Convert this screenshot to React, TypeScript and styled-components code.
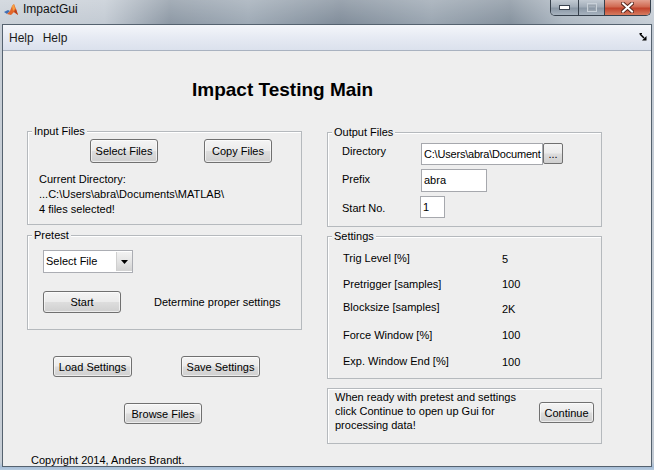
import React from 'react';
import styled, { createGlobalStyle } from 'styled-components';

const Global = createGlobalStyle`
  html, body { margin: 0; padding: 0; }
  body { font-family: "Liberation Sans", Arial, sans-serif; background: #fff; }
  * { box-sizing: border-box; }
`;

const Window = styled.div`
  width: 654px;
  height: 470px;
  display: flex;
  flex-direction: column;
  overflow: hidden;
  background:
    linear-gradient(to bottom, rgba(160, 184, 210, 0) 0, rgba(160, 184, 210, 0) 462px, #a6bdd6 467px, #b7cbe0 470px),
    linear-gradient(to right, #c7ced6 0%, #c0c8d1 16%, #8793a0 26%, #9aa6b2 38%, #7a8795 52%, #95a1ad 66%, #7f8c99 78%, #a9b4bf 86%, #c3cbd4 100%);
`;

const TitleBar = styled.div`
  height: 24px;
  flex: none;
  display: flex;
  align-items: flex-start;
  background: linear-gradient(to bottom, rgba(255, 255, 255, 0.25), rgba(255, 255, 255, 0.05));
`;

const AppIcon = styled.svg`
  width: 14px;
  height: 14px;
  margin: 3px 0 0 4px;
  flex: none;
`;

const TitleText = styled.span`
  margin-left: 5px;
  font-size: 12px;
  line-height: 19px;
  color: #111;
`;

const Controls = styled.div`
  margin-left: auto;
  margin-right: 3px;
  height: 16px;
  display: flex;
  border: 1px solid #36404c;
  border-top: none;
  border-radius: 0 0 5px 5px;
  overflow: hidden;
`;

const CtrlButton = styled.div<{ $w: number; $close?: boolean }>`
  width: ${(p) => p.$w}px;
  height: 100%;
  display: flex;
  align-items: center;
  justify-content: center;
  background: ${(p) =>
    p.$close
      ? 'linear-gradient(to bottom, #e3a08f 0%, #d06a52 45%, #c2432c 55%, #d67b5f 100%)'
      : 'linear-gradient(to bottom, #c2cad3 0%, #a2adb9 45%, #8a97a5 55%, #a8b3bf 100%)'};
  & + & {
    border-left: 1px solid #36404c;
  }
`;

const Client = styled.div`
  flex: 1;
  margin: 0 2px 3px 2px;
  border: 1px solid #55626f;
  display: flex;
  flex-direction: column;
  min-height: 0;
`;

const MenuBar = styled.div`
  height: 26px;
  flex: none;
  display: flex;
  align-items: center;
  padding-left: 1px;
  border-bottom: 1px solid #a9b2c0;
  background: linear-gradient(to bottom, #f4f6fa 0%, #e6eaf3 50%, #dbe1ed 100%);
`;

const MenuItem = styled.span`
  font-size: 12px;
  line-height: 24px;
  padding: 0 4px 0 5px;
  color: #1a1a1a;
`;

const DockArrow = styled.svg`
  width: 8px;
  height: 8px;
  margin-left: auto;
  margin-right: 4px;
  margin-bottom: 2px;
`;

const Content = styled.div`
  flex: 1;
  min-height: 0;
  overflow: hidden;
  background: #eeeeee;
  padding: 28px 0 0 24px;
  font-size: 11px;
  color: #000;
`;

const Heading = styled.h1`
  margin: 0;
  padding-left: 165px;
  font-size: 19px;
  line-height: 22px;
  font-weight: bold;
  color: #000;
`;

const Columns = styled.div`
  margin-top: 30px;
  display: grid;
  grid-template-columns: 275px 275px;
  column-gap: 25px;
  align-items: start;
`;

const Column = styled.div<{ $pt?: number }>`
  display: flex;
  flex-direction: column;
  padding-top: ${(p) => p.$pt ?? 0}px;
`;

const Panel = styled.div<{ $h: number; $mt?: number; $row?: boolean }>`
  position: relative;
  height: ${(p) => p.$h}px;
  margin-top: ${(p) => p.$mt ?? 0}px;
  border: 1px solid #b5b9bd;
  box-shadow: inset 1px 1px 0 #ffffff;
  display: flex;
  flex-direction: ${(p) => (p.$row ? 'row' : 'column')};
  align-items: flex-start;
`;

const Legend = styled.span`
  position: absolute;
  top: -7px;
  left: 4px;
  padding: 0 2px;
  font-size: 11px;
  line-height: 13px;
  background: #eeeeee;
`;

const Button = styled.button<{ $w: number; $h: number }>`
  width: ${(p) => p.$w}px;
  height: ${(p) => p.$h}px;
  flex: none;
  padding: 0;
  margin: 0;
  border: 1px solid #707070;
  border-radius: 3px;
  background: linear-gradient(to bottom, #f4f4f4 0%, #ebebeb 48%, #dddddd 52%, #cfcfcf 100%);
  box-shadow: inset 0 0 0 1px rgba(255, 255, 255, 0.6);
  font-family: "Liberation Sans", Arial, sans-serif;
  font-size: 11px;
  color: #000;
  display: flex;
  align-items: center;
  justify-content: center;
`;

const ButtonRow = styled.div<{ $mt: number; $pl: number; $gap?: number }>`
  display: flex;
  align-items: center;
  margin-top: ${(p) => p.$mt}px;
  padding-left: ${(p) => p.$pl}px;
  gap: ${(p) => p.$gap ?? 0}px;
`;

const InfoText = styled.div`
  margin-top: 9px;
  padding-left: 11px;
  line-height: 15px;
`;

const Popup = styled.div`
  margin: 14px 0 0 15px;
  width: 90px;
  height: 23px;
  border: 1px solid #abadb3;
  background: #fff;
  display: flex;
  align-items: stretch;
`;

const PopupText = styled.span`
  flex: 1;
  padding-left: 2px;
  line-height: 21px;
  font-size: 11px;
`;

const PopupArrow = styled.div`
  width: 16px;
  margin: 1px 0;
  display: flex;
  align-items: center;
  justify-content: center;
  background: linear-gradient(to bottom, #f2f2f2 0%, #e4e4e4 50%, #d2d2d2 100%);
  border-left: 1px solid #d0d0d0;
`;

const Note = styled.span`
  line-height: 13px;
`;

const FieldRow = styled.div<{ $mt?: number }>`
  display: flex;
  align-items: flex-start;
  height: 28px;
  margin-top: ${(p) => p.$mt ?? 0}px;
`;

const FieldLabel = styled.span<{ $mt: number }>`
  width: 93px;
  flex: none;
  padding-left: 14px;
  margin-top: ${(p) => p.$mt}px;
  line-height: 13px;
`;

const Edit = styled.div<{ $w: number; $h: number; $mt: number; $ml?: number }>`
  width: ${(p) => p.$w}px;
  height: ${(p) => p.$h}px;
  margin-top: ${(p) => p.$mt}px;
  margin-left: ${(p) => p.$ml ?? 0}px;
  flex: none;
  border: 1px solid #a6a8ad;
  background: #fff;
  padding: 0 1px 0 2px;
  line-height: ${(p) => p.$h - 2}px;
  font-size: 11px;
  white-space: nowrap;
  overflow: hidden;
`;

const PathText = styled.span`
  letter-spacing: -0.2px;
`;

const DotsButton = styled.button`
  width: 20px;
  height: 21px;
  margin-top: 3px;
  flex: none;
  padding: 0 0 3px 0;
  border: 1px solid #707070;
  border-radius: 2px;
  background: linear-gradient(to bottom, #f4f4f4 0%, #ebebeb 48%, #dddddd 52%, #cfcfcf 100%);
  font-family: "Liberation Sans", Arial, sans-serif;
  font-size: 11px;
  display: flex;
  align-items: flex-end;
  justify-content: center;
`;

const SettingRow = styled.div<{ $mt: number }>`
  display: flex;
  align-items: flex-start;
  margin-top: ${(p) => p.$mt}px;
  line-height: 13px;
`;

const SettingLabel = styled.span`
  width: 174px;
  flex: none;
  padding-left: 15px;
`;

const SettingValue = styled.span<{ $dy?: number }>`
  padding-top: ${(p) => p.$dy ?? 0}px;
`;

const ContinueText = styled.div`
  flex: 1;
  padding: 1px 0 0 7px;
  line-height: 14px;
`;

const ContinueButton = styled(Button)`
  margin: 13px 7px 0 0;
`;

const Copyright = styled.div`
  margin-top: 30px;
  padding-left: 4px;
  line-height: 12px;
  white-space: nowrap;
`;

const settings: { label: string; value: string; mt: number; dy?: number }[] = [
  { label: 'Trig Level [%]', value: '5', mt: 15, dy: 1 },
  { label: 'Pretrigger [samples]', value: '100', mt: 12 },
  { label: 'Blocksize [samples]', value: '2K', mt: 10, dy: 2 },
  { label: 'Force Window [%]', value: '100', mt: 13 },
  { label: 'Exp. Window End [%]', value: '100', mt: 13, dy: 1 },
];

export default function App() {
  return (
    <>
      <Global />
      <Window>
        <TitleBar>
          <AppIcon viewBox="0 0 14 14">
            <polygon points="0,9 4,7 6,8 3,11" fill="#3f6fb5" />
            <polygon points="3,11 6,8 8,3 10,1 12,6 14,12 10,9 7,12" fill="#e2652a" />
            <polygon points="8,3 10,1 11,6 9,8" fill="#f6a143" />
            <polygon points="10,9 14,12 12,6" fill="#b8401c" />
          </AppIcon>
          <TitleText>ImpactGui</TitleText>
          <Controls>
            <CtrlButton $w={27}>
              <svg width="11" height="5" viewBox="0 0 11 5">
                <rect x="0.5" y="0.5" width="10" height="4" fill="#fff" stroke="#3a4350" />
              </svg>
            </CtrlButton>
            <CtrlButton $w={26}>
              <svg width="10" height="9" viewBox="0 0 10 9">
                <rect x="0.5" y="0.5" width="9" height="8" fill="none" stroke="#c8d0d8" strokeWidth="1" />
                <rect x="1.5" y="2.5" width="7" height="5" fill="none" stroke="#9aa4ae" strokeWidth="1" />
              </svg>
            </CtrlButton>
            <CtrlButton $w={46} $close>
              <svg width="13" height="11" viewBox="0 0 13 11">
                <path d="M2 1.5 L11 9.5 M11 1.5 L2 9.5" stroke="#5a2a20" strokeWidth="4" strokeLinecap="square" />
                <path d="M2 1.5 L11 9.5 M11 1.5 L2 9.5" stroke="#ffffff" strokeWidth="2" strokeLinecap="square" />
              </svg>
            </CtrlButton>
          </Controls>
        </TitleBar>
        <Client>
          <MenuBar>
            <MenuItem>Help</MenuItem>
            <MenuItem>Help</MenuItem>
            <DockArrow viewBox="0 0 8 8">
              <path d="M0.5 0.5 H3" stroke="#000" strokeWidth="1" />
              <path d="M1 1 L5 5" stroke="#000" strokeWidth="1.6" />
              <polygon points="7.5,7.5 7.5,3 3,7.5" fill="#000" />
            </DockArrow>
          </MenuBar>
          <Content>
            <Heading>Impact Testing Main</Heading>
            <Columns>
              <Column>
                <Panel $h={94}>
                  <Legend>Input Files</Legend>
                  <ButtonRow $mt={7} $pl={62} $gap={46}>
                    <Button $w={68} $h={24}>Select Files</Button>
                    <Button $w={68} $h={24}>Copy Files</Button>
                  </ButtonRow>
                  <InfoText>
                    Current Directory:
                    <br />
                    {'...C:\\Users\\abra\\Documents\\MATLAB\\'}
                    <br />
                    4 files selected!
                  </InfoText>
                </Panel>
                <Panel $h={95} $mt={10}>
                  <Legend>Pretest</Legend>
                  <Popup>
                    <PopupText>Select File</PopupText>
                    <PopupArrow>
                      <svg width="7" height="4" viewBox="0 0 7 4">
                        <polygon points="0,0 7,0 3.5,4" fill="#000" />
                      </svg>
                    </PopupArrow>
                  </Popup>
                  <ButtonRow $mt={18} $pl={15} $gap={33}>
                    <Button $w={78} $h={22}>Start</Button>
                    <Note>Determine proper settings</Note>
                  </ButtonRow>
                </Panel>
                <ButtonRow $mt={26} $pl={26} $gap={49}>
                  <Button $w={79} $h={21}>Load Settings</Button>
                  <Button $w={79} $h={21}>Save Settings</Button>
                </ButtonRow>
                <ButtonRow $mt={26} $pl={97}>
                  <Button $w={78} $h={21}>Browse Files</Button>
                </ButtonRow>
                <Copyright>Copyright 2014, Anders Brandt.</Copyright>
              </Column>
              <Column $pt={1}>
                <Panel $h={95}>
                  <Legend>Output Files</Legend>
                  <FieldRow $mt={7}>
                    <FieldLabel $mt={5}>Directory</FieldLabel>
                    <Edit $w={122} $h={22} $mt={3}>
                      <PathText>{'C:\\Users\\abra\\Document'}</PathText>
                    </Edit>
                    <DotsButton>...</DotsButton>
                  </FieldRow>
                  <FieldRow>
                    <FieldLabel $mt={5}>Prefix</FieldLabel>
                    <Edit $w={66} $h={23} $mt={1}>abra</Edit>
                  </FieldRow>
                  <FieldRow>
                    <FieldLabel $mt={6}>Start No.</FieldLabel>
                    <Edit $w={25} $h={22} $mt={0} $ml={-1}>1</Edit>
                  </FieldRow>
                </Panel>
                <Panel $h={143} $mt={9}>
                  <Legend>Settings</Legend>
                  {settings.map((s) => (
                    <SettingRow key={s.label} $mt={s.mt}>
                      <SettingLabel>{s.label}</SettingLabel>
                      <SettingValue $dy={s.dy}>{s.value}</SettingValue>
                    </SettingRow>
                  ))}
                </Panel>
                <Panel $h={56} $mt={9} $row>
                  <ContinueText>
                    When ready with pretest and settings
                    <br />
                    click Continue to open up Gui for
                    <br />
                    processing data!
                  </ContinueText>
                  <ContinueButton $w={55} $h={21}>Continue</ContinueButton>
                </Panel>
              </Column>
            </Columns>
          </Content>
        </Client>
      </Window>
    </>
  );
}
